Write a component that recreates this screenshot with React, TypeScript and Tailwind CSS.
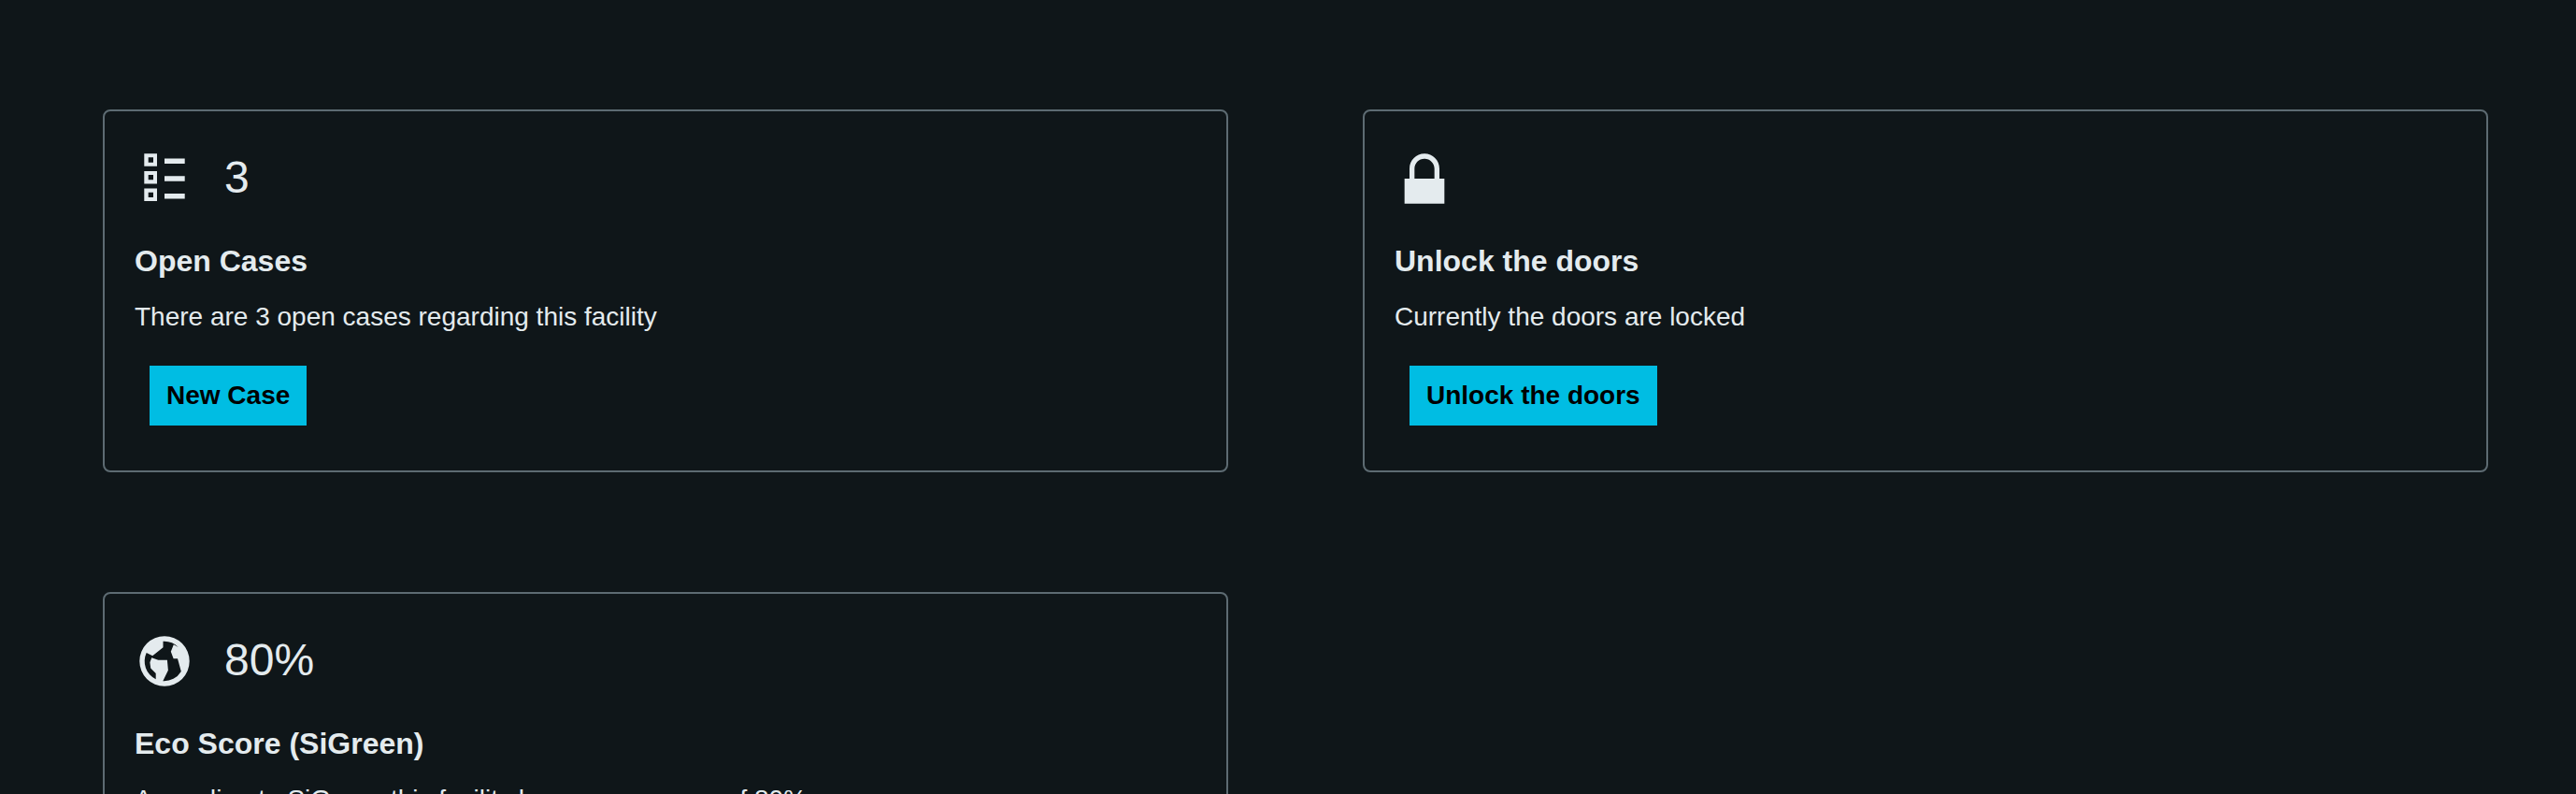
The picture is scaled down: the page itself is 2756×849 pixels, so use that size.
import type { ReactNode } from "react";

type CardProps = {
  icon: ReactNode;
  value?: string;
  title: string;
  text: string;
  action?: string;
};

const iconClass = "size-16 shrink-0 fill-current";

function TasksIcon() {
  return (
    <svg viewBox="0 0 64 64" className={iconClass}>
      <path
        fillRule="evenodd"
        d="M10.3 5.3H24V18.8H10.3ZM14.7 9.3V14.7H20V9.3ZM10.3 24H24V37.5H10.3ZM14.7 28V33.3H20V28ZM10.3 42.5H24V56H10.3ZM14.7 46.7V52H20V46.7ZM32 10.5H53.7V16H32ZM32 29.2H53.7V34.7H32ZM32 48H53.7V53.4H32Z"
      />
    </svg>
  );
}

function LockIcon() {
  return (
    <svg viewBox="0 0 512 512" className={iconClass}>
      <path d="M256 42.67c70.7 0 128 57.3 128 128V256h42.67v213.33H85.33V256H128v-85.33c0-70.7 57.3-128 128-128m0 42.66c-47.1 0-85.33 38.2-85.33 85.34V256h170.66v-85.33c0-47.13-38.2-85.34-85.33-85.34" />
    </svg>
  );
}

function GlobeIcon() {
  return (
    <svg viewBox="0 0 64 64" className={iconClass}>
      <path
        fillRule="evenodd"
        d="M32 5.3A26.7 26.7 0 1 1 32 58.7A26.7 26.7 0 1 1 32 5.3ZM30.5 10.7V17.2L19.2 26.3L12.7 23A21.3 21.3 0 0 0 22.7 51.2V45L17.2 39.5L16.4 33.3L18.3 28.2L25.3 30.7H34.9L35.9 41.7L30.3 53.3A21.3 21.3 0 0 0 49.8 43L46 29.2H41.6L38.8 21.8L41.8 14.2L46.8 17A21.3 21.3 0 0 0 30.5 10.7Z"
      />
    </svg>
  );
}

function Card({ icon, value, title, text, action }: CardProps) {
  return (
    <section className="flex h-[388px] flex-col items-start rounded-lg border-2 border-[#5d6b72] px-8 pt-10">
      <div className="flex h-16 items-start gap-8">
        {icon}
        {value && <span className="text-[48px] leading-[62px]">{value}</span>}
      </div>
      <h2 className="mt-9 text-[32px] leading-10 font-bold">{title}</h2>
      <p className="mt-5 text-[28px] leading-10">{text}</p>
      {action && (
        <button className="mt-8 ml-4 h-16 bg-[#00bde3] px-[18px] text-[28px] leading-10 font-bold text-black">
          {action}
        </button>
      )}
    </section>
  );
}

export default function App() {
  return (
    <main className="h-[849px] overflow-hidden bg-[#0f1619] pt-[117px] pl-[110px] font-['Liberation_Sans',Arial,sans-serif] text-[#e4ebee]">
      <div className="grid grid-cols-[1204px_1204px] gap-x-36 gap-y-32">
        <Card
          icon={<TasksIcon />}
          value="3"
          title="Open Cases"
          text="There are 3 open cases regarding this facility"
          action="New Case"
        />
        <Card
          icon={<LockIcon />}
          title="Unlock the doors"
          text="Currently the doors are locked"
          action="Unlock the doors"
        />
        <Card
          icon={<GlobeIcon />}
          value="80%"
          title="Eco Score (SiGreen)"
          text="According to SiGreen this facility has an eco score of 80%"
        />
      </div>
    </main>
  );
}
